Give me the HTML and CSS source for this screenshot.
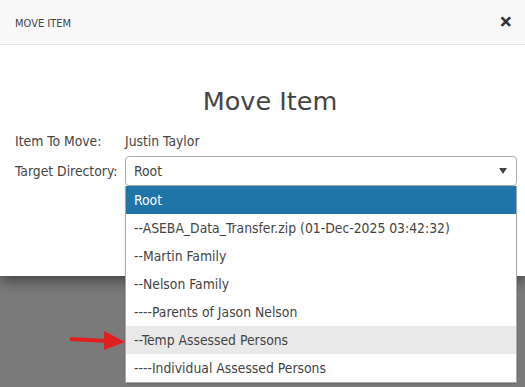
FILE: index.html
```html
<!DOCTYPE html>
<html>
<head>
<meta charset="utf-8">
<link rel="stylesheet" href="styles.css">
</head>
<body>
<div class="modal">
  <div class="modal-header">
    <span class="modal-title">MOVE ITEM</span>
    <span class="close">&#x2715;</span>
  </div>
  <div class="modal-body">
    <h1 class="heading">Move Item</h1>
    <div class="row">
      <span class="label">Item To Move:</span>
      <span class="value">Justin Taylor</span>
    </div>
    <div class="row">
      <span class="label">Target Directory:</span>
      <div class="select-wrap">
        <div class="select">
          <span>Root</span>
          <span class="caret"></span>
        </div>
        <ul class="dropdown">
          <li class="opt selected">Root</li>
          <li class="opt">--ASEBA_Data_Transfer.zip (01-Dec-2025 03:42:32)</li>
          <li class="opt">--Martin Family</li>
          <li class="opt">--Nelson Family</li>
          <li class="opt">----Parents of Jason Nelson</li>
          <li class="opt hover">--Temp Assessed Persons</li>
          <li class="opt">----Individual Assessed Persons</li>
        </ul>
      </div>
    </div>
  </div>
</div>
<svg class="arrow" width="60" height="24" viewBox="0 0 60 24">
  <line x1="1" y1="10" x2="38" y2="12" stroke="#e02020" stroke-width="4"/>
  <polygon points="35,2 56,13 35,21" fill="#e02020"/>
</svg>
</body>
</html>
```
FILE: styles.css
```css
html, body {
  margin: 0;
  padding: 0;
}
body {
  width: 525px;
  height: 387px;
  overflow: hidden;
  background: #7a7a7a;
  font-family: "DejaVu Sans Condensed", "DejaVu Sans", sans-serif;
  color: #444;
  position: relative;
}
.modal {
  background: #fff;
  height: 276px;
  box-shadow: 0 4px 14px rgba(0,0,0,0.5);
  position: relative;
}
.modal-header {
  height: 44px;
  background: #f9f9f9;
  border-bottom: 1px solid #e3e3e3;
  display: flex;
  align-items: center;
  justify-content: space-between;
  padding: 0 11px 0 15px;
}
.modal-title {
  font-size: 11px;
  color: #444;
  padding-top: 2px;
}
.close {
  font-size: 15px;
  font-weight: bold;
  color: #333;
  font-family: "DejaVu Sans", sans-serif;
  -webkit-text-stroke: 1px #333;
  margin-right: 2px;
}
.modal-body {
  padding: 0 8px 0 15px;
}
.heading {
  margin: 0;
  padding: 40px 0 0 8px;
  text-align: center;
  font-weight: normal;
  font-size: 25.5px;
  line-height: 32px;
  color: #444;
  font-family: "DejaVu Sans", sans-serif;
}
.row {
  display: flex;
  align-items: center;
  font-size: 13.8px;
}
.row:nth-of-type(1) {
  margin-top: 13px;
  height: 22px;
}
.row + .row {
  margin-top: 4px;
}
.label {
  width: 110px;
  flex: none;
}
.value {
  color: #444;
}
.select-wrap {
  flex: 1;
  position: relative;
}
.select {
  height: 28px;
  border: 1px solid #aaa;
  border-radius: 4px;
  display: flex;
  align-items: center;
  justify-content: space-between;
  padding: 0 8px 0 8px;
  box-sizing: content-box;
}
.caret {
  width: 0;
  height: 0;
  border-left: 4px solid transparent;
  border-right: 4px solid transparent;
  border-top: 6px solid #444;
  margin-right: 1px;
}
.dropdown {
  position: absolute;
  left: 0;
  top: 30px;
  width: 390px;
  margin: 0;
  padding: 0;
  list-style: none;
  background: #fff;
  border: 1px solid #aaa;
  border-top: none;
  box-shadow: 0 1px 2px rgba(0,0,0,0.15);
  z-index: 5;
}
.opt {
  height: 28px;
  line-height: 28px;
  padding-left: 8px;
  font-size: 13.8px;
  color: #444;
  white-space: nowrap;
}
.opt.selected {
  background: #1f74a8;
  color: #fff;
}
.opt.hover {
  background: #e9e9e9;
}
.arrow {
  position: absolute;
  left: 69px;
  top: 329px;
}
```
